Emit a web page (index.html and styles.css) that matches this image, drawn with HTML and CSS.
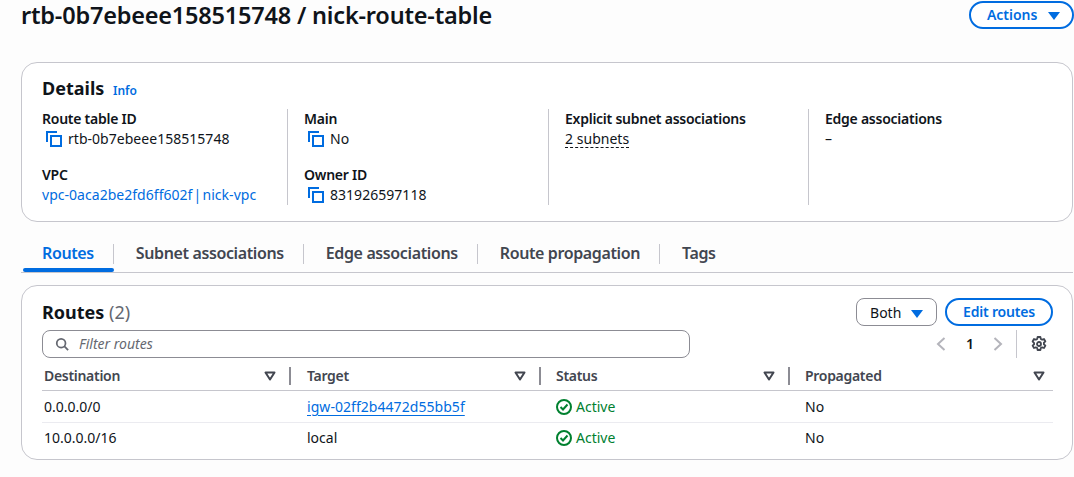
FILE: index.html
```html
<!DOCTYPE html>
<html lang="en">
<head>
    <meta charset="UTF-8">
    <title>Route table</title>
    <link rel="stylesheet" href="styles.css">
</head>

<body>
    <svg class="defs" width="0" height="0">
        <symbol id="copy" viewBox="0 0 16 16">
            <path d="M1 11V1h10" fill="none" stroke="currentColor" stroke-width="2"/>
            <rect x="5" y="5" width="10" height="10" fill="none" stroke="currentColor" stroke-width="2"/>
        </symbol>
        <symbol id="check" viewBox="0 0 16 16">
            <circle cx="8" cy="8" r="7" fill="none" stroke="currentColor" stroke-width="2"/>
            <path d="M4.5 8l2.5 2.5 4.5-5" fill="none" stroke="currentColor" stroke-width="2"/>
        </symbol>
        <symbol id="sort" viewBox="0 0 12 10">
            <path d="M1.5 1.5h9L6 8.500z" fill="none" stroke="currentColor" stroke-width="2" stroke-linejoin="round"/>
        </symbol>
    </svg>

    <div class="page-header">
        <h1>rtb-0b7ebeee158515748 / nick-route-table</h1>
        <button class="btn btn-actions">Actions <span class="caret"></span></button>
    </div>

    <!-- Details -->
    <section class="card details">
        <h2>Details <a class="info">Info</a></h2>
        <div class="details-cols">
            <div class="col">
                <div class="field">
                    <div class="label">Route table ID</div>
                    <div class="value"><svg class="icon-copy"><use href="#copy"/></svg>rtb-0b7ebeee158515748</div>
                </div>
                <div class="field">
                    <div class="label">VPC</div>
                    <div class="value"><a class="vpc-link">vpc-0aca2be2fd6ff602f | nick-vpc</a></div>
                </div>
            </div>
            <div class="col">
                <div class="field">
                    <div class="label">Main</div>
                    <div class="value"><svg class="icon-copy"><use href="#copy"/></svg>No</div>
                </div>
                <div class="field">
                    <div class="label">Owner ID</div>
                    <div class="value"><svg class="icon-copy"><use href="#copy"/></svg>831926597118</div>
                </div>
            </div>
            <div class="col">
                <div class="field">
                    <div class="label">Explicit subnet associations</div>
                    <div class="value"><span class="dashed">2 subnets</span></div>
                </div>
            </div>
            <div class="col">
                <div class="field">
                    <div class="label">Edge associations</div>
                    <div class="value">–</div>
                </div>
            </div>
        </div>
    </section>

    <!-- Tabs -->
    <div class="tabs">
        <div class="tab active"><span>Routes</span></div>
        <div class="tab"><span>Subnet associations</span></div>
        <div class="tab"><span>Edge associations</span></div>
        <div class="tab"><span>Route propagation</span></div>
        <div class="tab"><span>Tags</span></div>
    </div>

    <!-- Routes -->
    <section class="card routes">
        <div class="routes-top">
            <h2>Routes <span class="count">(2)</span></h2>
            <div class="routes-actions">
                <button class="btn-select">Both <span class="caret"></span></button>
                <button class="btn btn-edit">Edit routes</button>
            </div>
        </div>
        <div class="routes-tools">
            <div class="filter">
                <svg class="icon-search" viewBox="0 0 16 16"><circle cx="7" cy="7" r="5" fill="none" stroke="currentColor" stroke-width="2"/><path d="M10.5 10.5L15 15" fill="none" stroke="currentColor" stroke-width="2"/></svg>
                <span>Filter routes</span>
            </div>
            <div class="pager">
                <svg class="chevron" viewBox="0 0 10 16"><path d="M8.5 2L2 8l6.5 6" fill="none" stroke="currentColor" stroke-width="2"/></svg>
                <span class="page-num">1</span>
                <svg class="chevron" viewBox="0 0 10 16"><path d="M1.5 2L8 8l-6.5 6" fill="none" stroke="currentColor" stroke-width="2"/></svg>
            </div>
            <div class="settings">
                <svg class="icon-gear" viewBox="0 0 16 16">
                    <path d="M6.6 1h2.8l.4 2 1.3.7 1.9-.7 1.4 2.4-1.5 1.3v1.6l1.5 1.3-1.4 2.4-1.9-.7-1.3.7-.4 2H6.6l-.4-2-1.3-.7-1.9.7-1.4-2.4 1.5-1.3V7.200L1.600 5.400 3 3l1.900.7 1.300-.7z" fill="none" stroke="currentColor" stroke-width="1.800" stroke-linejoin="round"/>
                    <circle cx="8" cy="8" r="2" fill="none" stroke="currentColor" stroke-width="1.800"/>
                </svg>
            </div>
        </div>

        <div class="table">
            <div class="row head">
                <div class="cell"><span>Destination</span><svg class="icon-sort first"><use href="#sort"/></svg><i class="sep first"></i></div>
                <div class="cell"><span>Target</span><svg class="icon-sort"><use href="#sort"/></svg><i class="sep"></i></div>
                <div class="cell"><span>Status</span><svg class="icon-sort"><use href="#sort"/></svg><i class="sep"></i></div>
                <div class="cell"><span>Propagated</span><svg class="icon-sort last"><use href="#sort"/></svg></div>
            </div>
            <div class="row">
                <div class="cell">0.0.0.0/0</div>
                <div class="cell"><a class="underline">igw-02ff2b4472d55bb5f</a></div>
                <div class="cell status"><svg class="icon-check"><use href="#check"/></svg>Active</div>
                <div class="cell">No</div>
            </div>
            <div class="row">
                <div class="cell">10.0.0.0/16</div>
                <div class="cell">local</div>
                <div class="cell status"><svg class="icon-check"><use href="#check"/></svg>Active</div>
                <div class="cell">No</div>
            </div>
        </div>
    </section>
</body>

</html>
```
FILE: styles.css
```css
/* Basic styling for the page */
body {
    font-family: 'Noto Sans', sans-serif;
    font-size: 14px;
    line-height: 20px;
    background-color: #fdfdfd;
    margin: 0;
    padding: 0 1px 0 21px;
    color: #0f141a;
    overflow: hidden;
}

.defs {
    display: block;
    height: 0;
}

a {
    color: #006ce0;
}

h1, h2 {
    margin: 0;
}

.page-header {
    display: flex;
    justify-content: space-between;
    align-items: center;
    height: 30px;
    margin-right: -1px;
    margin-bottom: 32px;
}

.page-header h1 {
    font-size: 23.5px;
    line-height: 30px;
    font-weight: 600;
    letter-spacing: -0.2px;
}

.btn {
    font-family: inherit;
    font-size: 14px;
    font-weight: 600;
    line-height: 20px;
    color: #006ce0;
    background: #fff;
    border: 2px solid #006ce0;
    border-radius: 16px;
    height: 28px;
    padding: 0 16px;
}

.btn-actions {
    width: 105px;
    padding: 0 10px 0 14px;
    white-space: nowrap;
}

.caret {
    display: inline-block;
    width: 0;
    height: 0;
    margin-left: 7px;
    border-left: 6px solid transparent;
    border-right: 6px solid transparent;
    border-top: 8px solid #006ce0;
}

.card {
    background-color: #fff;
    border: 1px solid #c6c6cd;
    border-radius: 16px;
}

.details {
    height: 160px;
    box-sizing: border-box;
    padding: 11px 20px 0;
}

.details h2,
.routes h2 {
    font-size: 18px;
    line-height: 28px;
    height: 28px;
    font-weight: 700;
}

.info {
    font-size: 12px;
    font-weight: 600;
    margin-left: 4px;
}

.details-cols {
    display: grid;
    grid-template-columns: 245px 261px 260px 1fr;
    margin-top: 7px;
}

.col {
    height: 96px;
    border-left: 1px solid #c6c6cd;
    padding-left: 16px;
}

.col:first-child {
    border-left: none;
    padding-left: 0;
}

.field {
    height: 56px;
}

.label {
    font-weight: 600;
    line-height: 20px;
    letter-spacing: -0.25px;
}

.value {
    display: flex;
    align-items: center;
    height: 20px;
    letter-spacing: 0.03px;
}

.vpc-link {
    word-spacing: -2.5px;
}

.icon-copy {
    width: 16px;
    height: 16px;
    color: #006ce0;
    margin: 0 6px 0 4px;
    flex-shrink: 0;
}

.dashed {
    border-bottom: 1px dashed #0f141a;
    line-height: 17px;
}

.tabs {
    display: flex;
    height: 36px;
    margin-top: 14px;
    border-bottom: 1px solid #c6c6cd;
}

.tab {
    position: relative;
    padding: 7px 20px 0 22px;
    height: 29px;
    font-weight: 600;
    font-size: 16px;
    letter-spacing: -0.38px;
    color: #424650;
}

.tab::after {
    content: "";
    position: absolute;
    right: 0;
    top: 8px;
    height: 20px;
    border-right: 1px solid #c6c6cd;
}

.tab:last-child::after {
    display: none;
}

.tab.active {
    color: #006ce0;
    margin-left: 2px;
    padding: 7px 20px 0 19px;
}

.tab.active::before {
    content: "";
    position: absolute;
    left: 0;
    right: 0;
    top: 32px;
    height: 4px;
    background-color: #006ce0;
    border-radius: 2px;
}

.routes {
    height: 175px;
    box-sizing: border-box;
    margin-top: 12px;
    padding: 12px 19px 0 20px;
}

.routes-top {
    display: flex;
    justify-content: space-between;
    align-items: center;
    height: 28px;
}

.count {
    font-weight: 400;
    color: #656871;
}

.routes-actions {
    display: flex;
    gap: 8px;
}

.btn-select {
    font-family: inherit;
    font-size: 14px;
    color: #0f141a;
    background: #fff;
    border: 1px solid #8c8c94;
    border-radius: 8px;
    width: 81px;
    height: 28px;
    padding: 0;
}

.btn-select .caret {
    margin-left: 6px;
}

.btn-edit {
    width: 108px;
    padding: 0;
    letter-spacing: -0.2px;
}

.routes-tools {
    display: flex;
    align-items: center;
    height: 28px;
    margin-top: 4px;
}

.filter {
    display: flex;
    align-items: center;
    width: 648px;
    height: 28px;
    box-sizing: border-box;
    border: 1px solid #8c8c94;
    border-radius: 8px;
    padding-left: 12px;
    font-style: italic;
    color: #656871;
}

.icon-search {
    width: 14px;
    height: 14px;
    margin-right: 10px;
}

.pager {
    display: flex;
    align-items: center;
    margin-left: 246px;
    width: 81px;
    height: 28px;
    border-right: 1px solid #c6c6cd;
    box-sizing: border-box;
}

.chevron {
    width: 10px;
    height: 16px;
    color: #b4b4bb;
}

.page-num {
    font-weight: 600;
    margin: 0 19px 0 20px;
}

.settings {
    display: flex;
    align-items: center;
    padding-left: 14px;
}

.icon-gear {
    width: 16px;
    height: 16px;
    color: #424650;
}

.table {
    margin-top: 4px;
}

.row {
    display: grid;
    grid-template-columns: 249px 249px 249px 1fr;
    height: 32px;
    align-items: center;
    border-bottom: 1px solid #ebebf0;
    box-sizing: border-box;
}

.row:last-child {
    height: 30px;
    border-bottom: none;
}

.row.head {
    height: 29px;
    border-bottom: 1px solid #c6c6cd;
    font-weight: 600;
    letter-spacing: -0.3px;
    color: #424650;
}

.cell {
    display: flex;
    align-items: center;
    padding-left: 16px;
    position: relative;
    height: 100%;
}

.cell:first-child {
    padding-left: 2px;
}

.icon-sort {
    position: absolute;
    right: 14px;
    top: 9px;
    width: 12px;
    height: 10px;
    color: #424650;
}

.icon-sort.first {
    right: 15px;
}

.icon-sort.last {
    right: 8px;
}

.sep {
    position: absolute;
    right: -1px;
    top: 5px;
    height: 18px;
    border-right: 2px solid #8c8c94;
}

.sep.first {
    right: 0;
}

.underline {
    text-decoration: underline;
    text-underline-offset: 3px;
    letter-spacing: 0.05px;
}

.status {
    color: #00802f;
}

.icon-check {
    width: 16px;
    height: 16px;
    margin-right: 4px;
}
```
